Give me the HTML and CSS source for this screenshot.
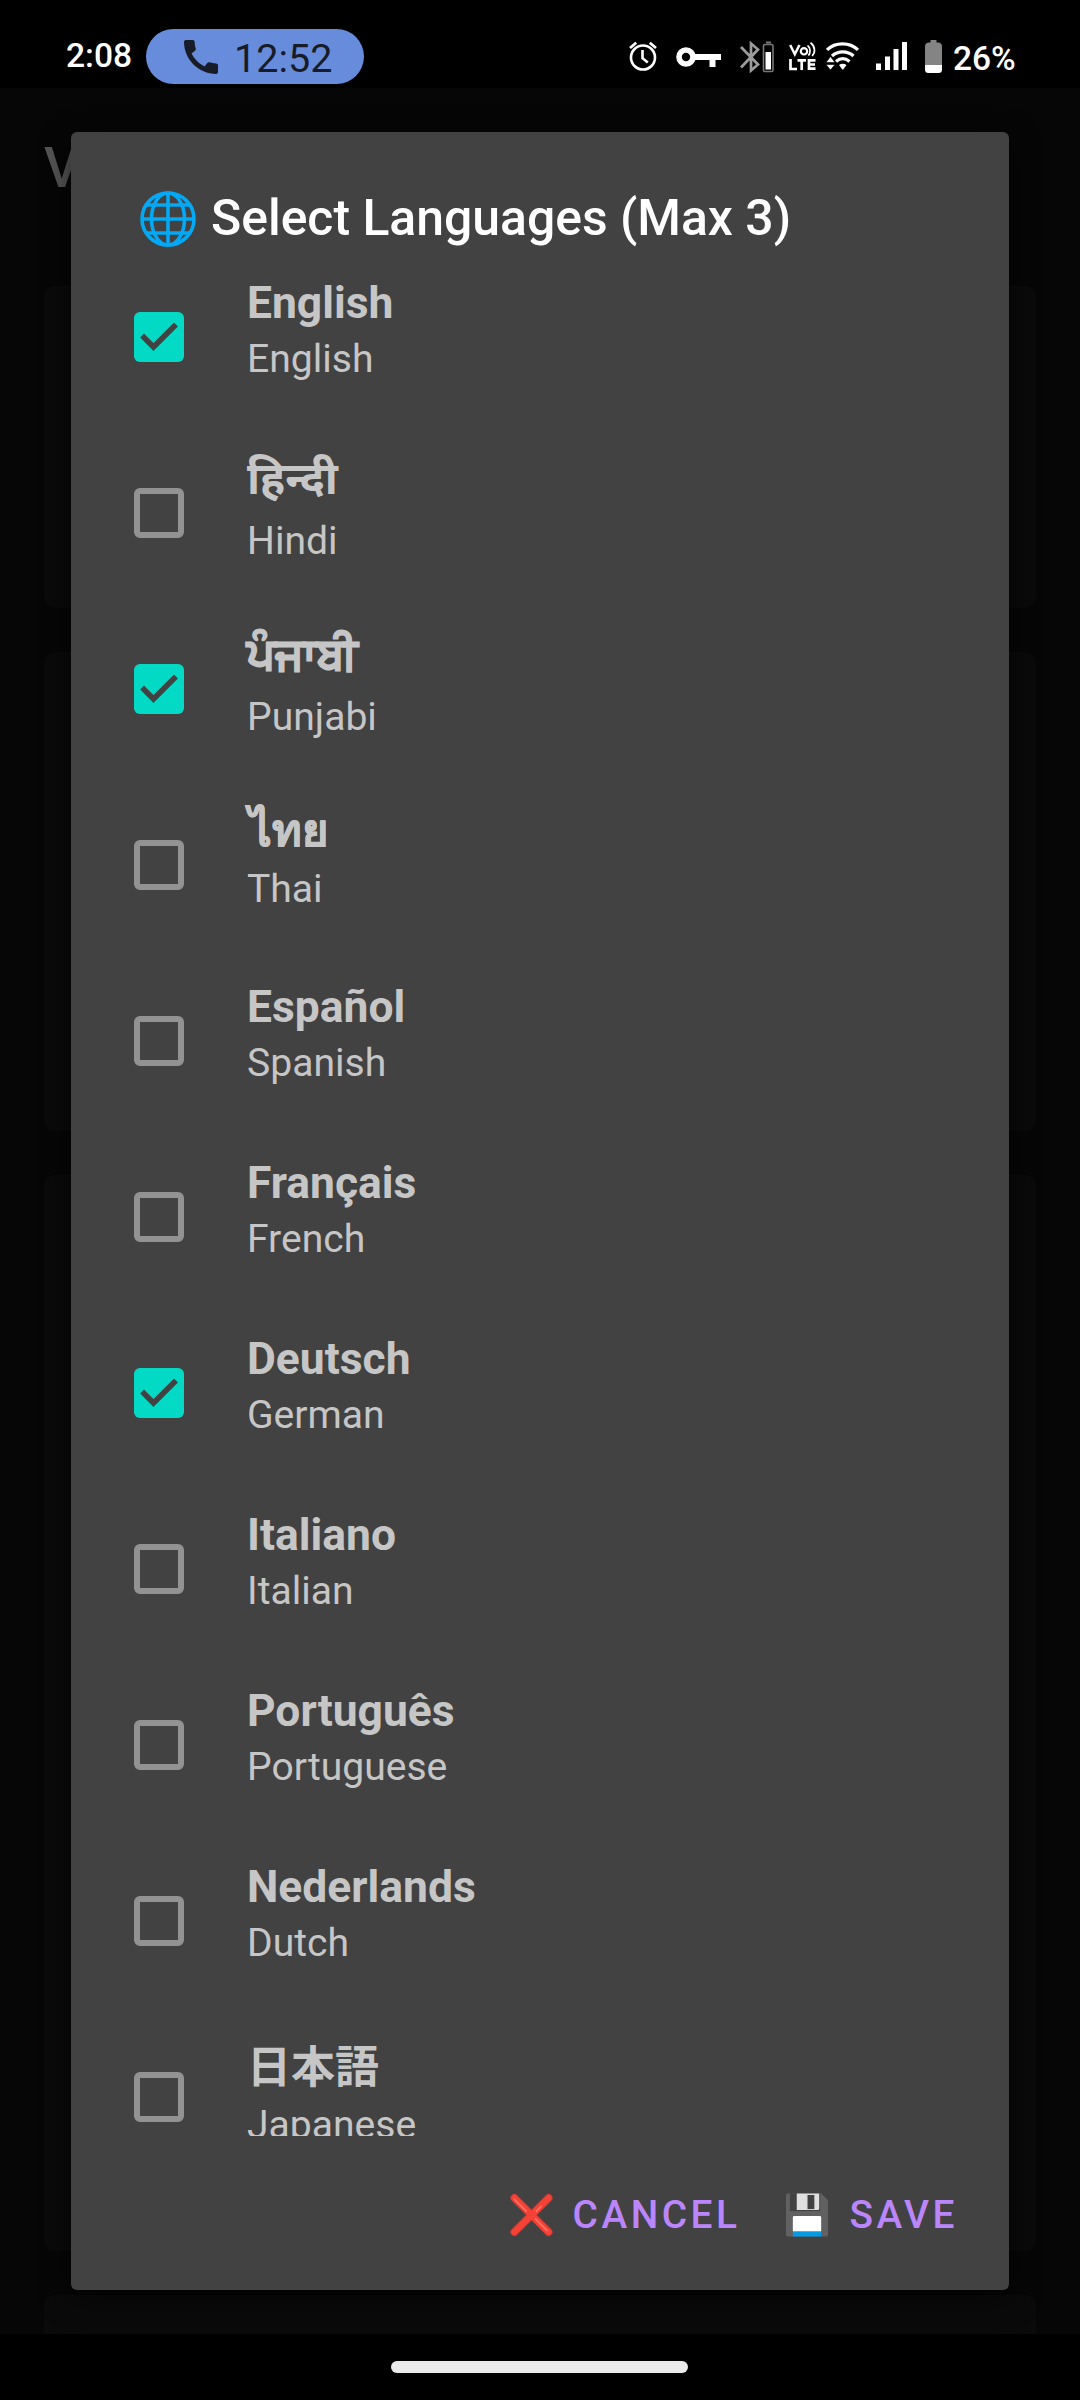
FILE: index.html
```html
<!DOCTYPE html>
<html lang="en">
<head>
<meta charset="utf-8">
<title>Select Languages</title>
<link rel="stylesheet" href="styles.css">
</head>
<body>
<div class="screen">
  <header class="status-bar">
    <span class="clock">2:08</span>
    <span class="call-pill">
      <svg class="call-icon" viewBox="3 3 18 18"><path d="M20.01 15.38c-1.23 0-2.42-.2-3.53-.56-.35-.12-.74-.03-1.01.24l-1.57 1.97c-2.83-1.35-5.48-3.9-6.89-6.83l1.95-1.66c.27-.28.35-.67.24-1.02-.37-1.11-.56-2.3-.56-3.53 0-.54-.45-.99-.99-.99H4.19C3.65 3 3 3.24 3 3.99 3 13.28 10.73 21 20.01 21c.71 0 .99-.63.99-1.18v-3.45c0-.54-.45-.99-.99-.99z"/></svg>
      <span class="call-time">12:52</span>
    </span>
    <div class="indicators">
      <svg class="alarm" width="28" height="30" viewBox="0 0 28 30" fill="none" stroke="#fff">
        <circle cx="14" cy="16.5" r="12" stroke-width="2.6"/>
        <path d="M13.5 9v8.2l5.3 4.2" stroke-width="2.6"/>
        <path d="M1 7l6.2-5.2M27 7l-6.2-5.2" stroke-width="2.8"/>
      </svg>
      <svg class="key" width="45" height="20" viewBox="0 0 45 20" fill="none" stroke="#fff">
        <circle cx="10" cy="10" r="7" stroke-width="5.6"/>
        <path d="M18 10h27" stroke-width="6"/>
        <path d="M36.500 10v10" stroke-width="6"/>
      </svg>
      <svg class="bluetooth" width="34" height="32" viewBox="0 0 34 32" fill="none">
        <path d="M1 6l17 17.500-7 6V2.500l7 6L1 26.500" stroke="#9b9b9b" stroke-width="2.700"/>
        <path d="M26 1.500h5" stroke="#777" stroke-width="2"/>
        <rect x="23.500" y="3.500" width="9.500" height="27" rx="1.500" stroke="#777" stroke-width="1.600"/>
        <rect x="25.500" y="11" width="5.500" height="17.500" fill="#fff"/>
      </svg>
      <svg class="volte" width="27" height="29" viewBox="0 0 27 29" fill="none" stroke="#fff">
        <path d="M1.200 3l4.600 9.300L10.400 3" stroke-width="2.500"/>
        <circle cx="15" cy="9.300" r="3.200" stroke-width="2.200"/>
        <path d="M18.500 3.500c3.300 2 3.300 8 .8 10M21.500.8c5 3.700 5 10 1.500 13" stroke-width="1.700"/>
        <path d="M1.500 17v10H8M8.500 18.300H17M12.700 18v10M26.500 18.300H20v8.400h6.500M20 22.500h6" stroke-width="2.700"/>
      </svg>
      <svg class="wifi" width="33" height="28" viewBox="0 0 33 28">
        <g fill="none" stroke="#fff" stroke-width="3.200">
          <path d="M1 8C9 -.2 24 -.2 32 8"/>
          <path d="M6 14c6-5.600 15.500-5.600 21.500 0"/>
          <path d="M10 19.500c4.500-3.800 9-3.800 13.500 0"/>
        </g>
        <path d="M13 23q3.800-2.600 7.500 0l-3.700 5z" fill="#fff"/>
        <path d="M0 20.500h9L4.500 14.500zM0 22.500h9l-4.500 5.500z" fill="#fff" stroke="#000" stroke-width=".6"/>
      </svg>
      <svg class="signal" width="31" height="28" viewBox="0 0 31 28" fill="#fff"><path d="M0 21.500h5V28H0zM9 14.500h5V28H9zM17.500 7h5v21h-5zM26 0h5v28h-5z"/></svg>
      <svg class="battery" width="17" height="33" viewBox="0 0 17 33">
        <path d="M5.500 0h6v2.500h2q3.500.5 3.500 4V25H0V6.500q0-3.500 3.500-4h2z" fill="#848484"/>
        <path d="M0 25h17v4.500q0 3.500-3.500 3.500h-10Q0 33 0 29.500z" fill="#fff"/>
      </svg>
      <span class="battery-level">26%</span>
    </div>
  </header>

  <main class="app">
    <h1 class="app-title">V</h1>
    <section class="card card-small"></section>
    <section class="card card-medium"></section>
    <section class="card card-large"></section>
    <section class="card card-last"></section>
  </main>

  <footer class="nav-bar"><span class="nav-handle"></span></footer>

  <div class="dialog" role="dialog">
    <h2 class="dialog-title">
      <svg class="globe" viewBox="0 0 56 56" fill="none" stroke="#03a9f4" stroke-width="3.600">
        <circle cx="28" cy="28" r="26"/>
        <ellipse cx="28" cy="28" rx="16.500" ry="26"/>
        <path d="M28 2v52M2 28h52M6 14h44M6 42h44"/>
      </svg>
      <span>Select Languages (Max 3)</span>
    </h2>
    <ul class="list">
      <li class="row"><span class="box checked"><svg viewBox="0 0 50 50"><path d="M8 23.500L19.500 35 42 12.500"/></svg></span><span class="names"><b lang="en">English</b><span>English</span></span></li>
      <li class="row"><span class="box"></span><span class="names tall"><b lang="hi">हिन्दी</b><span>Hindi</span></span></li>
      <li class="row"><span class="box checked"><svg viewBox="0 0 50 50"><path d="M8 23.500L19.500 35 42 12.500"/></svg></span><span class="names tall punjabi"><b lang="pa">ਪੰਜਾਬੀ</b><span>Punjabi</span></span></li>
      <li class="row"><span class="box"></span><span class="names thai"><b lang="th">ไทย</b><span>Thai</span></span></li>
      <li class="row"><span class="box"></span><span class="names"><b lang="es">Español</b><span>Spanish</span></span></li>
      <li class="row"><span class="box"></span><span class="names"><b lang="fr">Français</b><span>French</span></span></li>
      <li class="row"><span class="box checked"><svg viewBox="0 0 50 50"><path d="M8 23.500L19.500 35 42 12.500"/></svg></span><span class="names"><b lang="de">Deutsch</b><span>German</span></span></li>
      <li class="row"><span class="box"></span><span class="names"><b lang="it">Italiano</b><span>Italian</span></span></li>
      <li class="row"><span class="box"></span><span class="names"><b lang="pt">Português</b><span>Portuguese</span></span></li>
      <li class="row"><span class="box"></span><span class="names"><b lang="nl">Nederlands</b><span>Dutch</span></span></li>
      <li class="row"><span class="box"></span><span class="names tall japanese"><b lang="ja">日本語</b><span>Japanese</span></span></li>
    </ul>
    <div class="actions">
      <button class="action">
        <svg class="emoji" viewBox="0 0 44 44" fill="none" stroke-linecap="round">
          <path d="M4.500 4.500l35 35M39.500 4.500l-35 35" stroke="#d73a30" stroke-width="8"/>
          <path d="M4.500 4.500l35 35M39.500 4.500l-35 35" stroke="#f44336" stroke-width="6"/>
          <path d="M4.500 6l12 12M26 26l12 12M27 18l5-5" stroke="#ff7063" stroke-width="1.600"/>
        </svg>
        <span>CANCEL</span>
      </button>
      <button class="action save">
        <svg class="emoji" viewBox="0 0 44 44">
          <path d="M2 0h34l7 7v35q0 2-2 2H2q-2 0-2-2V2q0-2 2-2z" fill="#616161"/>
          <path d="M4 0h31v18H4z" fill="#424242"/>
          <path d="M11 0h23v15.500q0 1.500-1.500 1.500H11z" fill="#e0e0e0"/>
          <path d="M22 1.500h7V16h-7z" fill="#424242"/>
          <path d="M7 24.500q0-1.500 1.500-1.500h26q1.500 0 1.500 1.500V39H7z" fill="#fff"/>
          <path d="M7 39h29v5H7z" fill="#039be5"/>
        </svg>
        <span>SAVE</span>
      </button>
    </div>
  </div>
</div>
</body>
</html>
```
FILE: styles.css
```css
* { box-sizing: border-box; }
body { margin: 0; background: #000; font-family: Roboto, "Noto Sans", "Noto Sans CJK JP", sans-serif; }
svg { display: block; flex: none; }

.screen { position: relative; width: 1080px; height: 2400px; overflow: hidden; display: flex; flex-direction: column; background: #000; }

.status-bar { height: 88px; padding: 24px 66px 0 66px; display: flex; color: #fff; }
.clock { width: 80px; padding-top: 12px; font-size: 33.6px; line-height: 40px; font-weight: 500; white-space: nowrap; }
.call-pill { margin-top: 5px; width: 218px; height: 55px; padding-left: 38px; border-radius: 28px; background: #678cdb; display: flex; align-items: center; color: #181c28; }
.call-icon { width: 34px; height: 34px; fill: #181c28; }
.call-time { margin-left: 16px; padding-top: 5px; font-size: 39.5px; line-height: 44px; }
.indicators { margin-left: auto; display: flex; align-items: flex-start; }
.alarm { margin-top: 17px; }
.key { margin: 23px 0 0 19px; }
.bluetooth { margin: 17px 0 0 19px; }
.volte { margin: 18px 0 0 15px; }
.wifi { margin: 18px 0 0 10px; }
.signal { margin: 18px 0 0 17px; }
.battery { margin: 16px 0 0 18px; }
.battery-level { margin: 15px 0 0 11px; width: 61px; font-size: 33.5px; line-height: 40px; font-weight: 500; white-space: nowrap; }

.app { height: 2246px; overflow: hidden; padding: 0 44px; background: #060606; }
.app-title { margin: 0; height: 198px; padding-top: 48px; font-size: 55px; line-height: 64px; font-weight: 500; color: #555; }
.card { margin-bottom: 44px; border-radius: 11px; background: #0a0a0a; }
.card-small { height: 322px; }
.card-medium { height: 479px; }
.card-large { height: 1076px; }
.card-last { height: 100px; margin-bottom: 0; }

.nav-bar { height: 66px; padding-top: 27px; }
.nav-handle { display: block; width: 297px; height: 12px; margin-left: 391px; border-radius: 6px; background: #ebebeb; }

.dialog { position: absolute; left: 71px; top: 132px; width: 938px; height: 2158px; padding-top: 52px; border-radius: 6px; background: #424242; box-shadow: 0 8px 30px rgba(0, 0, 0, .6); display: flex; flex-direction: column; }
.dialog-title { margin: 0; height: 65px; padding-left: 69px; display: flex; gap: 15px; align-items: center; font-size: 49.9px; line-height: 62px; font-weight: 500; color: #fff; white-space: nowrap; }
.dialog-title span { padding-top: 3px; }
.globe { width: 56px; height: 56px; margin-top: 4px; }

.list { height: 1887px; margin: 0; padding: 0; overflow: hidden; list-style: none; color: #c6c6c6; }
.row { height: 176px; padding-left: 63px; display: flex; gap: 63px; }
.box { flex: none; width: 50px; height: 50px; margin-top: 63px; border: 6px solid #929292; border-radius: 6px; }
.box.checked { border: 0; background: #03dac5; }
.box path { fill: none; stroke: #424242; stroke-width: 5.5; }
.names { padding-top: 28px; display: flex; flex-direction: column; }
.names b { height: 57px; font-size: 44.4px; line-height: 52px; font-weight: 700; white-space: nowrap; }
.names span { font-size: 39.1px; line-height: 50px; }
.names.tall b { height: 63px; }
.names.punjabi b { margin-top: -1px; height: 64px; font-size: 44px; -webkit-text-stroke: 1.6px currentColor; }
.names.thai b { height: 59px; margin-left: 2px; font-size: 45px; -webkit-text-stroke: .6px currentColor; }
.names.japanese b { padding-top: 5px; font-size: 44px; }

.actions { padding: 51px 51px 0 0; display: flex; justify-content: flex-end; }
.action { display: flex; align-items: center; gap: 20px; padding: 0; border: 0; background: none; font-family: inherit; font-size: 38.8px; line-height: 56px; font-weight: 500; letter-spacing: 3.5px; color: #bb86fc; }
.save { margin-left: 46px; }
.emoji { width: 43px; height: 44px; }
```
